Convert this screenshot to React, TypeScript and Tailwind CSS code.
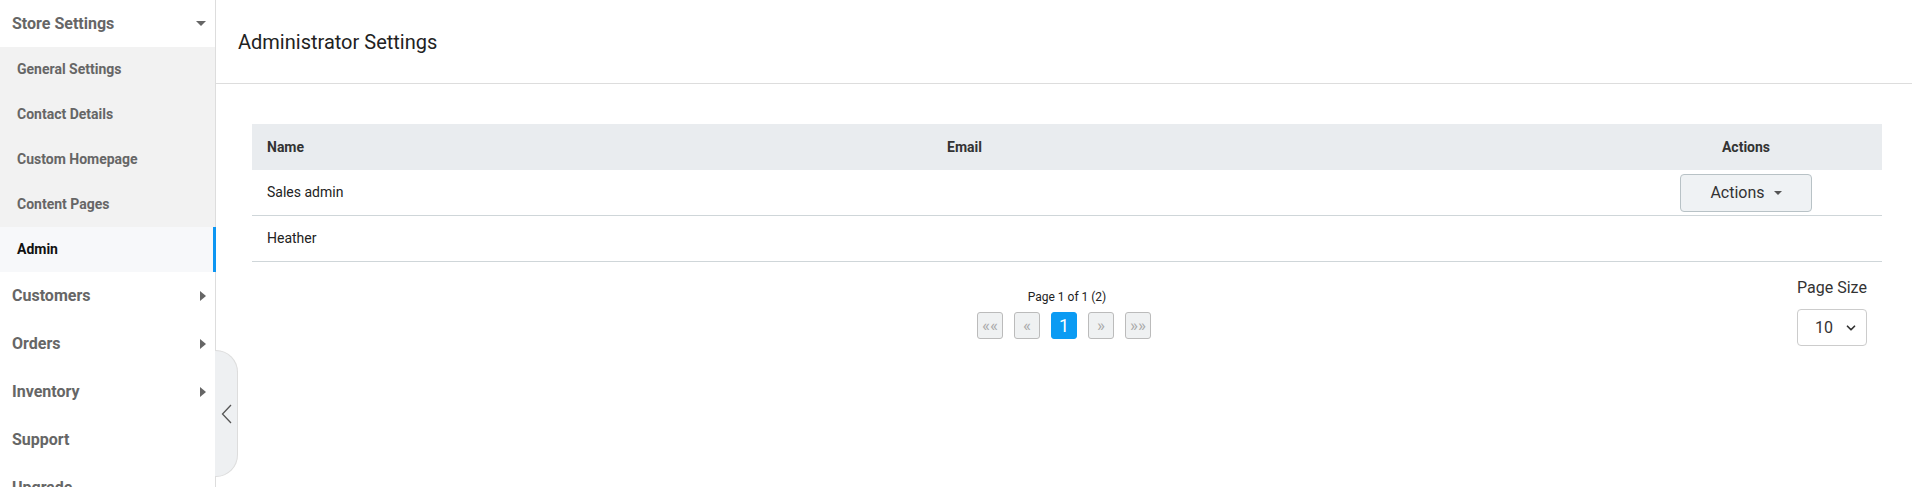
import { ChevronDown } from 'lucide-react'

const subItems = ['General Settings', 'Contact Details', 'Custom Homepage', 'Content Pages']
const topItems = [
  { label: 'Customers', caret: true },
  { label: 'Orders', caret: true },
  { label: 'Inventory', caret: true },
  { label: 'Support', caret: false },
  { label: 'Upgrade', caret: false },
]
const admins = ['Sales admin', 'Heather']

function CaretRight() {
  return (
    <svg width="6" height="10" viewBox="0 0 6 10" className="fill-[#666]">
      <path d="M0 0 L6 5 L0 10 Z" />
    </svg>
  )
}

function CaretDown({ className = 'fill-[#666]', w = 10, h = 5 }: { className?: string; w?: number; h?: number }) {
  return (
    <svg width={w} height={h} viewBox="0 0 10 5" className={className}>
      <path d="M0 0 L10 0 L5 5 Z" />
    </svg>
  )
}

function Sidebar() {
  return (
    <aside className="relative w-[216px] shrink-0 border-r border-[#dddddd] bg-white">
      <div className="flex h-[47px] items-center justify-between pl-3 pr-[9px] text-[16px] font-bold text-[#666]">
        <span>Store Settings</span>
        <CaretDown />
      </div>
      <div className="bg-[#f2f2f2]">
        {subItems.map(item => (
          <div key={item} className="flex h-[45px] items-center pl-[17px] text-[14px] font-bold text-[#666]">
            {item}
          </div>
        ))}
        <div className="relative -mr-px flex h-[45px] items-center border-r-[3px] border-[#0d96f2] bg-[#f7f8fa] pl-[17px] text-[14px] font-bold text-[#111]">
          Admin
        </div>
      </div>
      {topItems.map(item => (
        <div
          key={item.label}
          className="flex h-[48px] items-center justify-between pl-3 pr-[9px] text-[16px] font-bold text-[#666]"
        >
          <span>{item.label}</span>
          {item.caret && <CaretRight />}
        </div>
      ))}
      <button className="absolute left-[215px] top-[350px] flex h-[127px] w-[23px] items-center justify-center rounded-r-[22px] border border-l-0 border-[#dddddd] bg-[#eef0f2]">
        <svg width="11" height="20" viewBox="0 0 11 20" fill="none" className="stroke-[#555]">
          <path d="M10 1 L1.5 10 L10 19" strokeWidth="1.3" />
        </svg>
      </button>
    </aside>
  )
}

function PageButton({ label, active = false }: { label: string; active?: boolean }) {
  return (
    <div
      className={`flex h-[27px] w-[26px] items-center justify-center rounded-[3px] border ${
        active
          ? 'border-[#0b9bf3] bg-[#0b9bf3] text-[18px] text-white'
          : 'border-[#bbbbbb] bg-[#eff1f2] text-[17px] leading-none text-[#aaa]'
      }`}
    >
      {label}
    </div>
  )
}

export default function App() {
  return (
    <div className="flex h-[487px] w-full overflow-hidden bg-white font-['Roboto',sans-serif]">
      <Sidebar />
      <main className="flex-1">
        <div className="flex h-[84px] items-center border-b border-[#dddddd] pl-[22px] text-[20px] text-[#222]">
          Administrator Settings
        </div>

        <div className="pl-[36px] pr-[30px] pt-[40px]">
          <div className="grid h-[46px] grid-cols-[684px_1fr_272px] items-center bg-[#e9ecef] text-[14px] font-bold text-[#333]">
            <div className="pl-[15px]">Name</div>
            <div className="pl-[11px]">Email</div>
            <div className="text-center">Actions</div>
          </div>
          {admins.map((name, i) => (
            <div
              key={name}
              className="grid h-[46px] grid-cols-[684px_1fr_272px] items-center border-b border-[#cfd6d9] text-[14px] text-[#222]"
            >
              <div className="pl-[15px]">{name}</div>
              <div className="pl-[11px]"></div>
              <div className="flex justify-center">
                {i === 0 && (
                  <button className="flex h-[38px] w-[132px] items-center justify-center gap-[9px] rounded-[4px] border border-[#b8c2c6] bg-[#eff2f4] text-[16px] text-[#333]">
                    Actions
                    <CaretDown className="fill-[#555]" w={8} h={4} />
                  </button>
                )}
              </div>
            </div>
          ))}

          <div className="mt-[16px] grid grid-cols-[1fr_auto_1fr] items-start">
            <div />
            <div className="mr-[6px] flex flex-col items-center pt-[11px]">
              <div className="ml-[6px] text-[12px] leading-4 text-[#222]">Page 1 of 1 (2)</div>
              <div className="mt-[7px] flex gap-[11px]">
                <PageButton label="««" />
                <PageButton label="«" />
                <PageButton label="1" active />
                <PageButton label="»" />
                <PageButton label="»»" />
              </div>
            </div>
            <div className="flex flex-col items-center justify-self-end pr-[15px]">
              <div className="text-[16px] leading-5 text-[#333]">Page Size</div>
              <div className="mt-[11px] flex h-[37px] w-[70px] items-center justify-between rounded-[4px] border border-[#cccccc] pl-[17px] pr-[8px] text-[16px] text-[#333]">
                <span>10</span>
                <ChevronDown size={14} strokeWidth={3} className="text-[#333]" />
              </div>
            </div>
          </div>
        </div>
      </main>
    </div>
  )
}
